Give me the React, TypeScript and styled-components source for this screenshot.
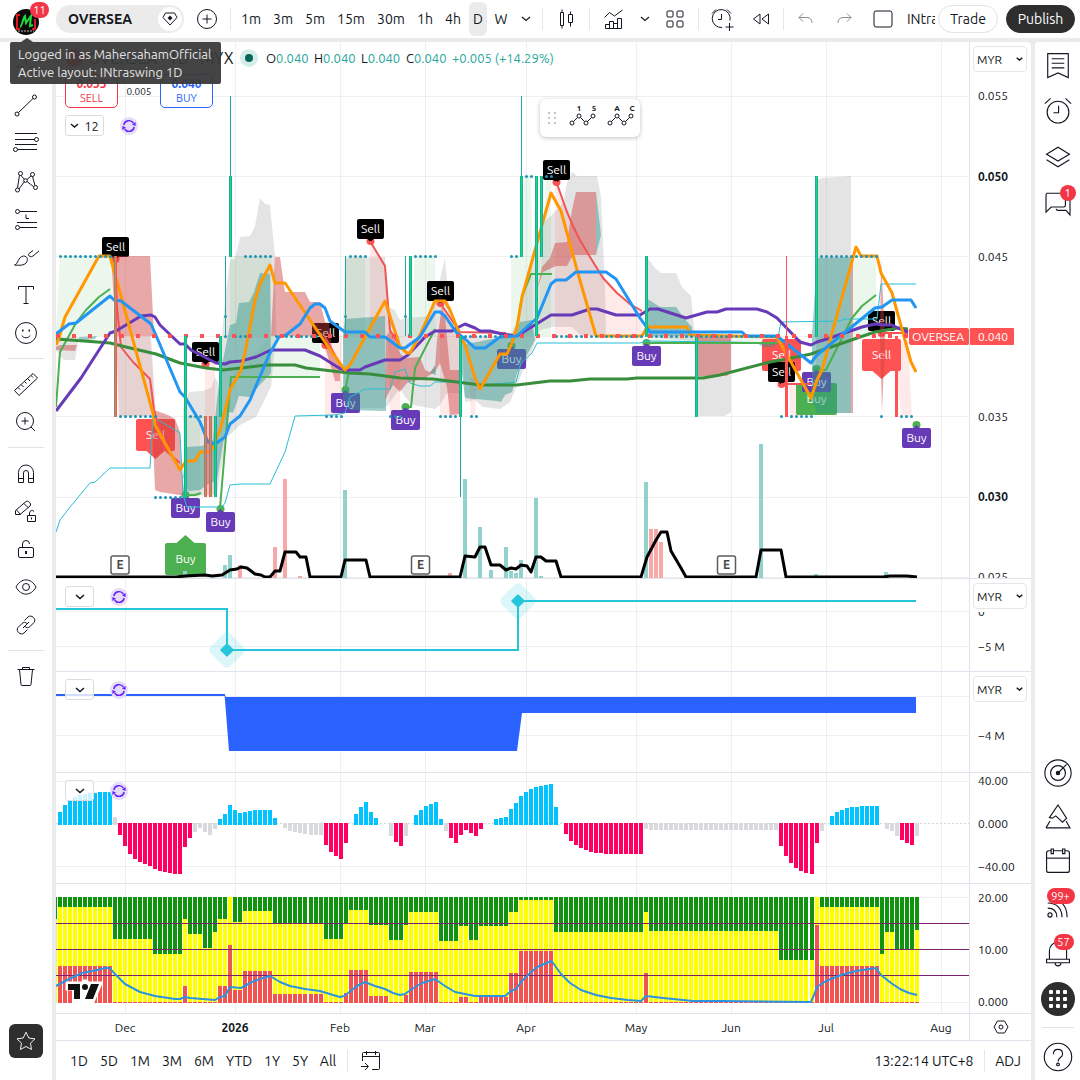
import React from 'react';
import styled, { createGlobalStyle } from 'styled-components';

const INK = '#131722';
const LINE = '#e0e3eb';
const GRID = 'rgba(42,46,57,0.07)';
const TEAL = '#26a69a';
const FONT = 'Ubuntu, "Noto Sans", "Open Sans", sans-serif';

const GlobalStyle = createGlobalStyle`
  *, *::before, *::after { box-sizing: border-box; }
  body { margin: 0; background: #ebebeb; color: ${INK}; font-family: ${FONT}; }
  button, select { font: inherit; color: inherit; margin: 0; padding: 0; border: 0; background: none; cursor: pointer; }
  svg { display: block; }
`;

/* ---------- layout ---------- */

const Shell = styled.div`
  height: 100vh;
  display: grid;
  grid-template: 38px minmax(0, 1fr) / 52px minmax(0, 1fr) 45px;
  gap: 4px;
  overflow: hidden;
`;
const Header = styled.header`
  grid-column: 1 / -1;
  display: flex;
  align-items: center;
  background: #fff;
  position: relative;
`;
const Divider = styled.span<{ $gap?: number }>`
  flex: none;
  width: 1px;
  height: 22px;
  margin: 0 ${p => p.$gap ?? 4}px;
  background: #e6e6e6;
`;
const ToolColumn = styled.nav`
  background: #fff;
  border-radius: 0 4px 0 0;
  padding: 6px 0;
  display: flex;
  flex-direction: column;
  align-items: center;
`;
const RightColumn = styled(ToolColumn)`
  border-radius: 4px 0 0 0;
  padding: 0;
`;
const Slot = styled.button<{ $h?: number; $w?: number }>`
  flex: none;
  position: relative;
  width: ${p => p.$w ?? 40}px;
  height: ${p => p.$h ?? 38}px;
  display: flex;
  align-items: center;
  justify-content: center;
`;
const Rule = styled.hr<{ $m?: number; $w?: number }>`
  width: ${p => p.$w ?? 36}px;
  height: 1px;
  border: 0;
  margin: ${p => p.$m ?? 6}px 0;
  background: #e3e3e3;
  flex: none;
`;
const Spacer = styled.div<{ $fixed?: number }>`
  flex: ${p => (p.$fixed ? `0 0 ${p.$fixed}px` : '1')};
`;
const Center = styled.main`
  display: flex;
  flex-direction: column;
  min-width: 0;
  min-height: 0;
  background: #fff;
  border-radius: 4px 4px 0 0;
  overflow: hidden;
`;
const Pane = styled.section<{ $size: number; $last?: boolean }>`
  position: relative;
  display: flex;
  flex: ${p => p.$size} 1 0;
  min-height: 0;
  border-bottom: ${p => (p.$last ? 0 : 1)}px solid ${LINE};
`;
const Plot = styled.svg`
  flex: 1;
  min-width: 0;
  height: 100%;
`;
const Scale = styled.div`
  position: relative;
  flex: none;
  width: 62px;
  border-left: 1px solid ${LINE};
  svg.labels { width: 61px; height: 100%; }
`;
const TimeRow = styled.div`
  display: flex;
  height: 27px;
  flex: none;
  border-top: 1px solid ${LINE};
`;
const AxisCorner = styled.button`
  width: 62px;
  border-left: 1px solid ${LINE};
  display: flex;
  align-items: center;
  justify-content: center;
`;
const BottomBar = styled.footer`
  display: flex;
  flex: none;
  align-items: center;
  height: 40px;
  padding: 1px 5px 0 8px;
  border-top: 1px solid ${LINE};
  font-size: 14px;
`;

/* ---------- header parts ---------- */

const Account = styled.button`
  position: relative;
  flex: none;
  width: 56px;
  height: 38px;
  padding: 5px 0 0 13px;
`;
const Count = styled.span<{ $w?: number; $top: number; $left: number }>`
  position: absolute;
  top: ${p => p.$top}px;
  left: ${p => p.$left}px;
  min-width: ${p => p.$w ?? 16}px;
  height: 16px;
  border-radius: 8px;
  background: #f23645;
  color: #fff;
  font-size: 11px;
  line-height: 16px;
  text-align: center;
`;
const SymbolPill = styled.div`
  display: flex;
  flex: none;
  align-items: center;
  justify-content: space-between;
  width: 128px;
  height: 28px;
  padding: 0 2px 0 12px;
  border-radius: 14px;
  background: #ebebeb;
`;
const SymbolName = styled.button`
  font-size: 14px;
  font-weight: 700;
`;
const PillIcon = styled.button`
  display: flex;
  align-items: center;
  justify-content: center;
  width: 24px;
  height: 24px;
  border-radius: 12px;
  background: #fff;
`;
const Interval = styled.button<{ $w: number; $active?: boolean }>`
  flex: none;
  width: ${p => (p.$active ? 18 : p.$w)}px;
  height: 34px;
  margin: 0 ${p => (p.$active ? 2 : 0)}px;
  border-radius: 6px;
  font-size: 14px;
  white-space: nowrap;
  background: ${p => (p.$active ? '#ebebeb' : 'none')};
`;
const LayoutName = styled.button`
  flex: none;
  width: 28px;
  overflow: hidden;
  white-space: nowrap;
  text-align: left;
  font-size: 14px;
`;
const RoundButton = styled.button<{ $dark?: boolean; $w: number }>`
  flex: none;
  width: ${p => p.$w}px;
  height: 28px;
  border: 1px solid ${p => (p.$dark ? '#2e2e2e' : '#e3e3e3')};
  border-radius: 14px;
  background: ${p => (p.$dark ? '#2e2e2e' : '#fff')};
  color: ${p => (p.$dark ? '#fff' : INK)};
  font-size: 14px;
`;
const Tooltip = styled.div`
  position: absolute;
  z-index: 5;
  top: 42px;
  left: 10px;
  padding: 3px 8px;
  width: 211px;
  height: 42px;
  border-radius: 2px;
  background: rgba(56, 56, 56, 0.94);
  color: #e3e3e3;
  font-size: 13px;
  line-height: 18px;
  white-space: nowrap;
  &::before {
    content: '';
    position: absolute;
    left: 11px;
    top: -4px;
    border: 6px solid transparent;
    border-top: 0;
    border-bottom: 4px solid rgba(56, 56, 56, 0.94);
  }
`;
const StarButton = styled.button`
  width: 34px;
  height: 34px;
  margin-bottom: 16px;
  border-radius: 6px;
  background: #2e2e2e;
  color: #fff;
  display: flex;
  align-items: center;
  justify-content: center;
`;
const AppsButton = styled.span`
  width: 34px;
  height: 34px;
  border-radius: 17px;
  background: #2e2e2e;
  display: flex;
  align-items: center;
  justify-content: center;
`;

/* ---------- overlays on the chart canvas ---------- */

const Legend = styled.div`
  position: absolute;
  top: 5px;
  left: 9px;
  display: flex;
  flex-direction: column;
  gap: 5px;
`;
const LegendRow = styled.div`
  display: flex;
  align-items: center;
  height: 22px;
  font-size: 13px;
`;
const Logo = styled.span`
  width: 18px;
  height: 18px;
  margin-right: 5px;
  border-radius: 9px;
  background: #f23645;
`;
const Title = styled.span`
  width: 144px;
  font-size: 16px;
  white-space: nowrap;
`;
const Status = styled.span`
  width: 18px;
  height: 18px;
  margin: 0 8px;
  border-radius: 9px;
  border: 5px solid #d5ede8;
  background: #056656;
`;
const Value = styled.span<{ $w?: number }>`
  width: ${p => p.$w ?? 47}px;
  white-space: nowrap;
  color: ${TEAL};
  b { font-weight: 400; color: ${INK}; }
`;
const TradeRow = styled.div`
  display: flex;
  align-items: center;
`;
const Quote = styled.button<{ $c: string }>`
  width: 53px;
  height: 34px;
  border: 1px solid ${p => p.$c};
  border-radius: 5px;
  background: #fff;
  color: ${p => p.$c};
  font-size: 11px;
  line-height: 14px;
  b { display: block; font-size: 12px; }
`;
const Spread = styled.span`
  width: 42px;
  font-size: 10px;
  text-align: center;
`;
const CollapseRow = styled.div`
  display: flex;
  align-items: center;
  gap: 16px;
  margin-top: 2px;
`;
const Collapse = styled.button<{ $w: number }>`
  display: flex;
  align-items: center;
  justify-content: center;
  gap: 5px;
  width: ${p => p.$w}px;
  height: 21px;
  border: 1px solid #dcdcdc;
  border-radius: 3px;
  background: rgba(255, 255, 255, 0.8);
  font-size: 13px;
`;
const PaneLegend = styled.div`
  position: absolute;
  top: 7px;
  left: 9px;
  display: flex;
  align-items: center;
  gap: 16px;
`;
const Favorites = styled.div`
  position: absolute;
  top: 57px;
  left: 484px;
  display: flex;
  align-items: center;
  width: 100px;
  height: 38px;
  padding-left: 8px;
  border-radius: 6px;
  background: #fff;
  box-shadow: 0 1px 4px rgba(0, 0, 0, 0.25);
`;
const UnitBox = styled.label`
  position: absolute;
  top: 4px;
  left: 3px;
  width: 54px;
  height: 29px;
  background: #fff;
  select {
    appearance: none;
    display: block;
    width: 54px;
    height: 26px;
    padding: 0 3px;
    border: 1px solid #e6e6e6;
    border-radius: 4px;
    font-size: 12px;
  }
  svg { position: absolute; right: 4px; top: 11px; pointer-events: none; }
`;
const Range = styled.button<{ $w: number }>`
  width: ${p => p.$w}px;
  white-space: nowrap;
`;

/* ---------- icons ---------- */

const Icon = ({ s = 28, w = 1, c = 'currentColor', children }: { s?: number; w?: number; c?: string; children: React.ReactNode }) => (
  <svg width={s} height={s} viewBox="0 0 28 28" fill="none" stroke={c} strokeWidth={w} aria-hidden="true">{children}</svg>
);
const Chevron = ({ s = 10, w = 1.5 }: { s?: number; w?: number }) => (
  <svg width={s} height={s * 0.6} viewBox="0 0 10 6" fill="none" stroke={INK} strokeWidth={w} aria-hidden="true"><path d="M1 1l4 3.5L9 1" /></svg>
);
const Sync = () => (
  <svg width="18" height="18" viewBox="0 0 18 18" fill="none" stroke="#651fff" strokeWidth="1.4" aria-hidden="true">
    <circle cx="9" cy="9" r="9" fill="#e4dcf8" stroke="none" />
    <path d="M3.8 8a5.3 5.3 0 0 1 9.600-2M14.200 10a5.300 5.300 0 0 1-9.600 2" />
    <path d="M15.600 5v4l-3.600-1.400zM2.400 13V9L6 10.400z" fill="#651fff" stroke="none" />
  </svg>
);

const tools: [string, React.ReactNode][] = [
  ['Cross', <path d="M14 4v8M14 16v8M3 14h9M16 14h9" />],
  ['Trend line', <><path d="M6.5 21.5L21 7.5" /><circle cx="5" cy="23" r="2" /><circle cx="22.5" cy="6" r="2" /></>],
  ['Fib retracement', <><path d="M3 4.5h22M3 10.5h19.500M3 15.500h22M5.500 20.500H25" /><circle cx="24.500" cy="10.500" r="2" /><circle cx="3.500" cy="20.500" r="2" /></>],
  ['Pattern', <><path d="M5.500 21L7.500 8M9 8.500l3.500 4M15 12.500l4-3.500M7 22l5.500-7.500M15 14.500l7 5.500M20.500 9.500l2.500 9" /><circle cx="5.500" cy="23" r="2" /><circle cx="8.500" cy="6.500" r="2" /><circle cx="13.500" cy="13.500" r="1.800" /><circle cx="20.500" cy="7.500" r="2" /><circle cx="23.500" cy="20.500" r="2" /></>],
  ['Long position', <><path d="M8 6.500h17M5 17.500h20M8 22.500h17M14 9.500v4h3" /><circle cx="5.500" cy="6.500" r="2" /><circle cx="5.500" cy="22.500" r="2" /></>],
  ['Brush', <><path d="M2.500 22c4-1 3-8 9-9 4 0 5 4 2.500 7-2 2.500-6 2.500-11.500 2z" /><path d="M27 8l-6 5c-2 2-6-.5-4-2.500l4-3" /></>],
  ['Text', <path d="M6.500 8.500v-3h15v3M14 5.500v17M11.500 22.500h5" />],
  ['Emoji', <><circle cx="14" cy="14" r="10.500" /><path d="M10 16.500c1 3 7 3 8 0" /><path d="M10 11.500h1.500M16.500 11.500H18" strokeWidth="2" /></>],
];
const tools2: [string, React.ReactNode][] = [
  ['Measure', <path d="M2.500 20.500L21 3.500l4.500 4.500L7 25.500zM9 14.500l2.500 2.500M12.500 11.500l2 2M15.500 8.500l2.500 2.500M6 17.500l2 2M19 5.500l2 2" />],
  ['Zoom in', <><circle cx="13" cy="13" r="8.500" /><path d="M13 9.500v7M9.500 13h7M19 19l4 4" /></>],
];
const tools3: [string, React.ReactNode][] = [
  ['Magnet', <path d="M6.500 23.500v-10a7.500 7.500 0 0 1 15 0v10h-5V14a2.500 2.500 0 0 0-5 0v9.500zM6.500 19.500h5M16.500 19.500h5" />],
  ['Drawing mode', <><path d="M3.500 17.500v-4L14 4.500c2-1.500 6 2 4 4.500L8 17.500zM12 6.500l4.500 4.500M4.500 13l4 4.500" /><path d="M15.500 18.500h8v6h-8zM17.500 18.500v-2.500a2.500 2.500 0 0 1 4.500-1.500M19.500 20.500v2" /></>],
  ['Lock', <><rect x="6.500" y="12.500" width="15" height="10" rx="1.500" /><path d="M10.500 12.500V9a3.500 3.500 0 0 1 7 0" /><path d="M14 16v3" strokeWidth="2" /></>],
  ['Hide', <><path d="M4 14c5-9.500 15-9.500 20 0-5 9.500-15 9.500-20 0z" /><circle cx="14" cy="14" r="3.500" /></>],
  ['Link', <path d="M12.500 9.500l3.500-3.500c3-3 9 2 6 5.500l-4 4c-1.500 1.500-3.500 1.500-5 0M15.500 18.500L12 22c-3 3-9-2-6-5.500l4-4c1.500-1.500 3.500-1.500 5 0M11 17l6-6" />],
];

const ElliottWave = ({ a, b }: { a: string; b: string }) => (
  <svg width="34" height="30" viewBox="0 0 34 30" fill="none" stroke={INK} strokeWidth="1" aria-hidden="true">
    <path d="M7.500 18.500l4-4M14.500 14.500l4 4M21.500 18.500l4-4" />
    <circle cx="6" cy="20" r="2" /><circle cx="13" cy="13" r="2" /><circle cx="20" cy="20" r="2" /><circle cx="27" cy="13" r="2" />
    <text x="13" y="8" fontSize="8" fontWeight="700" textAnchor="middle" fill={INK} stroke="none">{a}</text>
    <text x="28" y="8" fontSize="8" fontWeight="700" textAnchor="middle" fill={INK} stroke="none">{b}</text>
  </svg>
);

/* ---------- chart data ---------- */

const barX = (i: number) => Math.round(58 + i * 5.01);
const monthX = [125, 235, 340, 425, 526, 636, 731, 826, 941];
const months = ['Dec', '2026', 'Feb', 'Mar', 'Apr', 'May', 'Jun', 'Jul', 'Aug'];

const greyAreas = [
  '56,337 79,337 75,360 64,360 56,350',
  '116,336 151,336 154,386 156,416 119,416',
  '183,410 189,392 203,391 211,388 215,377 221,388 222,336 225,300 230,260 235,259 240,237 250,236 255,226 260,198 265,204 270,205 275,257 276,336 271,387 263,403 256,417 240,425 232,433 227,437 222,463 217,494 185,497',
  '343,336 345,258 385,257 388,307 395,310 400,320 407,318 430,316 440,280 445,258 450,320 455,325 460,336 460,393 447,393 440,405 435,409 413,405 405,397 400,388 388,405 384,408 345,408',
  '462,337 510,336 517,322 521,300 527,280 533,250 542,223 550,217 563,203 567,183 572,172 577,176 597,176 601,197 605,290 606,336 580,335 572,327 553,327 540,330 532,350 520,378 510,402 500,409 483,407 475,400 465,402',
  '646,256 655,268 661,273 676,273 682,287 691,296 695,337 731,337 731,412 725,416 698,416 694,341 646,337',
  '816,180 822,178 851,176 851,413 816,413',
];
const greenAreas = [
  '56,330 60,256 112,256 114,336 56,336', '187,416 200,416 200,497 187,497', '230,256 271,256 271,336 230,336',
  '271,336 320,336 320,377 230,377', '345,256 365,256 365,336 345,336', '411,336 415,256 435,256 436,336',
  '511,336 511,256 521,256 524,176 531,176 533,336', '542,256 546,176 551,176 551,336 537,336',
  '646,336 777,336 777,343 646,343', '851,256 876,256 876,336 851,336',
];
const pinkAreas = [
  '116,336 150,336 156,416 119,416', '205,362 215,362 215,497 205,497', '325,336 342,336 342,416 325,416',
  '370,241 385,266 390,330 392,336 370,336', '388,336 400,336 400,416 390,416', '440,303 460,332 460,416 440,416',
  '469,378 477,378 475,416 471,416', '555,182 580,240 603,278 630,304 642,311 642,336 555,336',
  '789,384 812,384 812,416 790,416', '894,341 908,341 912,416 901,416',
];
const redAreas = [
  '111,256 150,256 154,336 116,336', '56,347 60,345 77,345 75,351 56,350',
  '152,386 154,410 168,415 175,419 180,432 181,467 185,496 179,495 167,493 160,492 155,490 153,440',
  '271,336 275,257 280,257 285,292 305,292 310,302 320,302 325,322 329,323 333,357 340,363 340,381 335,381 331,367 323,340 319,336',
  '385,400 386,337 390,330 400,353 405,358 420,357 425,370 430,372 435,367 437,340 442,307 445,317 450,370 460,370 460,414 450,415 447,387 440,363 435,372 425,378 418,380 407,383 400,392 393,385',
  '537,290 542,267 550,258 555,243 567,242 572,210 576,192 596,192 596,255 573,255 567,266 556,266 543,272',
  '697,337 731,337 731,372 727,376 697,376', '851,268 853,260 853,413 851,413', '881,258 885,337 882,413 880,337',
];
const tealAreas = [
  '79,337 97,336 95,339 79,341',
  '183,477 187,447 202,446 213,440 217,400 221,370 230,325 236,323 239,303 249,302 254,292 260,273 270,274 271,373 258,387 250,397 239,396 233,413 229,412 222,450 217,480 207,485 200,490 188,491',
  '343,336 345,319 385,316 386,411 350,410 343,400', '430,373 435,365 436,375',
  '462,337 465,344 477,342 497,338 510,337 517,330 520,322 532,320 535,340 517,373 512,392 505,395 501,402 497,401 465,398 462,373',
  '596,192 601,235 596,255', '646,298 660,307 676,307 683,317 692,327 692,336 646,336',
  '757,343 777,343 774,347 763,347', '812,336 817,258 851,257 851,413 817,413 812,400',
];
const studyLines: [string, number, string][] = [
  ['#26bfd6', 1, '56,532 60,520 70,507 90,483 95,482 110,468 150,468 153,417 180,433 183,495 187,507 222,507 225,503 230,485 240,484 270,484 285,452 295,416 333,415 345,413 350,397 365,389 390,389 395,372 405,369 410,383 420,386 430,386 435,382 460,382 483,385 516,382 521,363 532,353 537,343 640,343 647,341 727,342 777,343 781,322 840,321 845,319 877,319 881,284 916,284'],
  ['#4caf50', 2, '56,407 60,352 76,323 86,310 99,297 110,289'],
  ['#4caf50', 2, '185,495 195,495 201,493'],
  ['#4caf50', 2, '220,508 229,400 231,377 320,377'],
  ['#4caf50', 2, '345,390 349,372'],
  ['#4caf50', 2, '405,407 411,407 415,368 435,329'],
  ['#4caf50', 2, '510,346 517,327 522,297 531,274 552,274'],
  ['#4caf50', 2, '646,343 777,343'],
  ['#4caf50', 2, '817,370 826,370 852,318 862,306 876,295'],
  ['#f05455', 2, '115,257 117,307 121,347 133,362 150,379 154,410 165,450 180,463'],
  ['#f05455', 2, '325,337 341,366'],
  ['#f05455', 2, '370,241 385,266 390,330 400,347'],
  ['#f05455', 2, '440,303 460,332 506,333'],
  ['#f05455', 2, '556,181 567,212 573,226 580,240 590,257 603,278 617,293 630,304 642,311'],
  ['#f05455', 2, '781,384 811,384'],
  ['#f05455', 2, '881,333 908,333'],
  ['#388e3c', 3, '56,339 84,341 110,343 126,347 156,354 180,363 206,368 223,370 241,368 266,365 295,365 306,368 350,373 370,374 400,378 433,379 457,382 480,385 517,385 550,381 570,381 590,379 627,379 637,378 703,378 720,375 770,362 787,359 811,354 860,337 875,332 898,328 908,329'],
  ['#673ab7', 3, '56,411 81,378 110,333 116,331 141,316 151,315 155,317 160,325 180,344 185,344 191,350 216,363 225,364 230,362 241,361 256,357 271,350 305,350 320,356 339,368 345,370 360,370 365,367 385,360 400,360 408,355 425,337 435,331 452,331 457,328 465,324 475,328 480,331 490,331 502,334 517,336 551,315 572,315 590,309 597,309 616,315 640,315 650,309 658,309 686,318 707,312 717,312 726,309 757,309 767,312 777,318 800,342 811,345 817,342 830,338 862,327 875,324 885,325 892,325 898,328 908,332'],
  ['#ff9800', 3, '56,345 59,338 65,317 99,256 110,256 154,417 155,425 180,470 186,461 195,461 200,452 210,452 214,445 221,427 230,390 241,370 245,353 255,300 260,284 270,265 275,283 285,283 333,354 345,370 350,365 365,337 385,301 400,347 407,353 410,353 420,335 435,301 445,301 450,310 460,335 465,345 475,378 480,389 500,354 507,354 512,343 517,327 522,297 537,243 551,193 561,211 577,270 596,336 642,336 647,327 687,327 690,335 777,337 811,398 817,380 822,370 832,333 856,247 861,256 877,256 881,273 892,293 911,362 916,372'],
  ['#2196f3', 3, '56,334 69,324 76,323 110,296 114,300 121,301 151,324 155,333 180,392 185,397 200,422 208,442 215,444 225,437 230,424 240,416 250,400 269,355 279,337 286,335 300,324 310,308 315,304 320,304 325,308 330,321 345,332 365,332 370,337 385,337 400,348 405,348 420,337 435,312 440,312 445,316 456,332 465,339 475,348 485,348 500,337 517,336 537,318 551,284 556,280 566,280 576,272 606,272 616,279 640,318 650,332 742,332 746,336 777,336 811,363 817,355 875,308 882,307 892,300 911,300 916,308'],
];
const volumeAverage = '56,577 176,577 185,576 205,575 212,576 222,575 230,570 237,569 241,567 247,568 255,574 261,575 265,577 270,577 275,571 280,571 285,552 296,552 300,557 306,557 310,577 341,577 345,560 366,560 370,577 460,577 465,556 475,557 480,547 485,547 491,565 500,565 506,570 511,568 516,569 521,565 527,566 531,572 536,557 541,557 546,561 556,561 561,577 641,577 647,557 656,540 661,532 667,532 671,551 681,568 686,577 756,577 761,550 781,550 786,577 883,577 890,576 907,576 917,577';

/* x, top, falling */
const volumes: [number, number, boolean?][] = [
  [185, 571], [225, 565], [230, 555], [240, 565, true], [275, 547, true], [285, 479, true], [300, 576, true], [345, 490],
  [450, 573, true], [465, 479], [480, 527], [491, 570], [506, 547], [511, 571], [516, 573], [521, 560], [536, 498],
  [541, 576], [646, 482], [651, 529, true], [656, 529, true], [661, 542, true], [761, 444], [816, 574], [886, 572],
];

/* x, top, bottom, kind */
const candles: [number, number, number, 'thin' | 'up' | 'down' | 'thinDown' | 'mix'][] = [
  [230, 96, 176, 'thin'], [230, 176, 257, 'up'], [115, 256, 417, 'mix'], [225, 256, 336, 'thin'], [185, 336, 498, 'up'],
  [220, 336, 417, 'up'], [205, 416, 497, 'mix'], [210, 416, 497, 'mix'], [215, 416, 497, 'up'], [345, 256, 336, 'thin'],
  [405, 256, 336, 'thin'], [410, 256, 336, 'up'], [460, 336, 417, 'up'], [460, 417, 497, 'thin'], [521, 96, 176, 'thin'],
  [521, 176, 257, 'up'], [536, 176, 336, 'up'], [541, 176, 257, 'up'], [646, 256, 337, 'up'], [696, 337, 417, 'up'],
  [786, 256, 336, 'thinDown'], [786, 336, 417, 'down'], [816, 176, 337, 'up'], [896, 336, 417, 'down'],
];

/* y, first x, last x */
const dotRuns: [number, number, number][] = [
  [256, 60, 111], [256, 245, 271], [256, 350, 366], [256, 415, 436], [256, 511, 517], [256, 821, 877],
  [176, 526, 532], [176, 546, 552], [336, 225, 226], [336, 235, 246], [336, 276, 316], [336, 465, 501], [336, 556, 641], [336, 651, 777],
  [416, 120, 156], [416, 190, 201], [416, 326, 342], [416, 390, 401], [416, 440, 456], [416, 471, 476],
  [416, 781, 782], [416, 791, 812], [416, 881, 882], [416, 901, 912], [497, 155, 181], [316, 225, 226], [316, 345, 346], [316, 405, 406],
];
const run = (from: number, to: number, step: number) => {
  const out: number[] = [];
  for (let v = from; v <= to; v += step) out.push(v);
  return out;
};

/* ---------- momentum histogram: tone, first bar index, then heights ---------- */
type Tone = 'b' | 'p' | 'g';
const toneColor: Record<Tone, string> = { b: '#00c4ff', p: '#ff0062', g: '#d9dade' };
const momentum: [Tone, number, number[]][] = [
  ['b', 0, [12, 19, 23, 27, 29, 30, 31, 31, 32, 32, 32]],
  ['g', 11, [7]],
  ['p', 12, [-11, -22, -30, -35, -38, -40, -42, -45, -47, -48, -49, -50, -50, -23, -14]],
  ['g', 27, [-8, -4, -8, -11, -5]],
  ['b', 32, [5, 10, 19, 14, 11, 12, 13, 14, 14, 14, 14, 6]],
  ['g', 45, [-4, -7, -8, -9, -10, -11, -11, -11]],
  ['p', 53, [-21, -28, -32, -35, -19]],
  ['b', 59, [10, 17, 22, 12, 6]],
  ['g', 66, [-12]], ['p', 67, [-18, -22]], ['g', 69, [-12]],
  ['b', 71, [9, 14, 18, 20, 22, 5]],
  ['g', 77, [-7]], ['p', 78, [-14, -19, -11, -6, -9, -12, -5]],
  ['b', 87, [5, 6, 7, 15, 21, 28, 32, 35, 37, 38, 39, 40, 17]],
  ['p', 101, [-10, -17, -21, -24, -26, -28, -29, -29, -30, -30, -30, -30, -30, -30, -30, -30]],
  ['g', 117, [-5, ...Array(26).fill(-6)]],
  ['p', 144, [-22, -32, -39, -44, -47, -49, -50, -19]],
  ['g', 152, [-7]],
  ['b', 154, [8, 12, 14, 16, 17, 17, 18, 18, 18, 18]],
  ['g', 165, [-5, -7, -12]], ['p', 168, [-16, -19, -21]], ['g', 171, [-12]],
];

/* first bar, last bar, bottom of green, top of red */
const stacks: [number, number, number, number][] = [
  [0, 10, 907, 966], [11, 18, 939, 1002], [19, 24, 954, 1002], [25, 25, 919, 986], [26, 28, 934, 1002], [29, 30, 948, 1002],
  [31, 31, 932, 1002], [32, 33, 919, 986], [34, 34, 897, 945], [35, 36, 922, 990], [37, 42, 911, 971], [43, 52, 923, 994],
  [53, 56, 939, 1002], [57, 57, 923, 993], [58, 61, 910, 970], [62, 65, 925, 996], [66, 68, 940, 1002], [69, 69, 925, 995],
  [70, 75, 912, 972], [76, 79, 941, 1002], [80, 81, 926, 997], [82, 83, 940, 1002], [84, 89, 926, 997], [90, 91, 912, 973],
  [92, 98, 900, 951], [99, 116, 932, 1002], [117, 117, 912, 973], [118, 143, 931, 1002], [144, 150, 960, 1002], [151, 151, 897, 925],
  [152, 163, 907, 966], [164, 164, 954, 1002], [165, 166, 932, 1002], [167, 170, 949, 1002], [171, 171, 930, 1002],
];
const trendLine = '56,986 67,980 82,973 97,970 105,968 110,968 113,972 125,984 140,992 155,996 175,999 180,999 185,997 190,998 215,1000 220,997 225,996 230,987 241,988 252,982 263,978 270,976 280,982 290,986 305,989 320,991 333,995 340,997 344,996 348,993 357,986 365,982 375,986 385,989 393,993 400,995 405,994 412,989 422,983 435,979 445,986 455,992 465,994 475,996 505,996 511,991 516,989 521,982 528,975 537,967 551,961 553,963 561,974 570,983 581,990 596,995 611,998 628,1000 641,1001 646,996 663,998 693,1001 722,1001 811,1002 814,995 817,987 826,981 841,975 856,971 876,968 881,975 891,983 900,989 909,993 917,995';

/* ---------- chart pieces ---------- */

const Grid = ({ ys, top, bottom }: { ys: number[]; top: number; bottom: number }) => (
  <g fill={GRID}>
    {monthX.map(x => <rect key={x} x={x} y={top} width="1" height={bottom - top} />)}
    {ys.map(y => <rect key={y} x="56" y={y} width="913" height="1" />)}
  </g>
);

const Tag = ({ x, y, kind }: { x: number; y: number; kind: 'sell' | 'buy' }) => {
  const sell = kind === 'sell';
  const w = sell ? 27 : 29;
  return (
    <g>
      <circle cx={x} cy={sell ? y + 12 : y - 13} r="4" fill={sell ? '#ff5252' : '#4caf50'} />
      <rect x={x - w / 2} y={y - 10} width={w} height="20" rx="2" fill={sell ? '#000' : '#673ab7'} />
      <path d={sell ? `M${x - 3} ${y + 10}h6l-3 3z` : `M${x - 3} ${y - 10}h6l-3 -3z`} fill={sell ? '#000' : '#673ab7'} />
      <text x={x} y={y + 4} fontSize="12" fill="#fff" textAnchor="middle">{sell ? 'Sell' : 'Buy'}</text>
    </g>
  );
};
const BigTag = ({ x, y, kind }: { x: number; y: number; kind: 'sell' | 'buy' }) => {
  const sell = kind === 'sell';
  const w = sell ? 39 : 41;
  const fill = sell ? '#ff5252' : '#4caf50';
  return (
    <g>
      <rect x={x - w / 2} y={y - 16} width={w} height="32" rx="2" fill={fill} />
      <path d={sell ? `M${x - 9} ${y + 16}h18l-9 8z` : `M${x - 9} ${y - 16}h18l-9 -8z`} fill={fill} />
      <text x={x} y={y + 4} fontSize="12" fill="#fff" textAnchor="middle">{sell ? 'Sell' : 'Buy'}</text>
    </g>
  );
};
const Candle = ({ c }: { c: (typeof candles)[number] }) => {
  const [x, top, bottom, kind] = c;
  const h = bottom - top;
  if (kind === 'thin') return <rect x={x} y={top} width="1" height={h} fill={TEAL} />;
  if (kind === 'thinDown') return <rect x={x} y={top} width="1" height={h} fill="#ff5252" />;
  if (kind === 'down') return <rect x={x - 1} y={top} width="3" height={h} fill="#ff5252" />;
  return (
    <g>
      <rect x={x - 1} y={top} width="3" height={h} fill={kind === 'up' ? TEAL : '#ff5252'} />
      <rect x={x} y={top} width="1" height={h} fill={kind === 'up' ? '#00e676' : '#5dbb73'} />
    </g>
  );
};
const Area = ({ shapes, fill }: { shapes: string[]; fill: string }) => (
  <g fill={fill}>{shapes.map(s => <polygon key={s} points={s} />)}</g>
);

const MainPlot = () => (
  <Plot viewBox="56 42 913 536" preserveAspectRatio="xMinYMin slice" role="img" aria-label="OVERSEA price chart">
    <Grid ys={[96, 176, 256, 336, 416, 497, 577]} top={42} bottom={578} />
    <Area shapes={greyAreas} fill="rgba(120,120,120,0.2)" />
    <Area shapes={greenAreas} fill="rgba(76,175,80,0.11)" />
    <Area shapes={pinkAreas} fill="rgba(255,82,82,0.12)" />
    <BigTag x={155.5} y={435} kind="sell" />
    <BigTag x={781.5} y={355} kind="sell" />
    <BigTag x={881.5} y={355} kind="sell" />
    <BigTag x={185.5} y={559} kind="buy" />
    <BigTag x={816.5} y={399} kind="buy" />
    {[[115.5, 247], [205.5, 352], [325.5, 333], [370.5, 229], [440.5, 291], [556.5, 170], [781.5, 372], [881.5, 321]].map(([x, y]) => <Tag key={x} x={x} y={y} kind="sell" />)}
    {[[185.5, 508], [220.5, 522], [345.5, 403], [405.5, 420], [511.5, 359], [646.5, 356], [816.5, 382], [916.5, 438]].map(([x, y]) => <Tag key={x} x={x} y={y} kind="buy" />)}
    <Area shapes={redAreas} fill="rgba(205,62,62,0.45)" />
    <Area shapes={tealAreas} fill="rgba(50,150,140,0.48)" />
    {volumes.map(([x, y, down]) => <rect key={x} x={x - 2} y={y} width="4" height={578 - y} fill={down ? '#f7a9a7' : '#92d2cc'} />)}
    <g fill="none" strokeLinejoin="round">
      {studyLines.map(([c, w, p]) => <polyline key={p} points={p} stroke={c} strokeWidth={w} />)}
    </g>
    <g fill="#1f93b5">
      {dotRuns.map(([y, a, b]) => run(a, b, 5).map(x => <circle key={`${x}-${y}`} cx={x + 0.5} cy={y + 0.5} r="1.5" />))}
    </g>
    <g fill="#ff5252">{run(58, 908, 16).map(x => <rect key={x} x={x - 2} y="334" width="4" height="4" />)}</g>
    {candles.map((c, i) => <Candle key={i} c={c} />)}
    <polyline points={volumeAverage} fill="none" stroke="#000" strokeWidth="3" strokeLinejoin="round" />
    {[120, 420.5, 726.5].map(x => (
      <g key={x}>
        <rect x={x - 9} y="556" width="18" height="18" rx="2" fill="#fff" stroke="#5d5d5d" strokeWidth="1.5" />
        <text x={x} y="569" fontSize="12" fontWeight="600" fill="#4a4a4a" textAnchor="middle">E</text>
      </g>
    ))}
    <rect x="909" y="328" width="60" height="17" rx="2" fill="#ff5252" />
    <text x="912" y="341" fontSize="12" fill="#fff">OVERSEA</text>
  </Plot>
);

type Label = [y: number, text: string, bold?: boolean];
const ScaleLabels = ({ top, height, items, children }: { top: number; height: number; items: Label[]; children?: React.ReactNode }) => (
  <svg className="labels" viewBox={`0 ${top} 61 ${height}`} preserveAspectRatio="xMinYMin slice" fontSize="12" fill={INK}>
    {items.map(([y, t, bold]) => <text key={t} x="8" y={y + 4} fontWeight={bold ? 700 : 400}>{t}</text>)}
    {children}
  </svg>
);
const Unit = ({ id }: { id: string }) => (
  <UnitBox htmlFor={id}>
    <select id={id} aria-label="Currency" defaultValue="MYR"><option>MYR</option></select>
    <Chevron s={7} w={2} />
  </UnitBox>
);
const PaneTools = () => (
  <PaneLegend>
    <Collapse $w={29} aria-label="Show indicator legend"><Chevron /></Collapse>
    <Sync />
  </PaneLegend>
);
const Diamond = ({ x, y }: { x: number; y: number }) => (
  <g fill="#26c6da">
    <rect x={x - 14} y={y - 14} width="28" height="28" rx="5" opacity="0.16" transform={`rotate(45 ${x} ${y})`} />
    <rect x={x - 5} y={y - 5} width="10" height="10" rx="1" transform={`rotate(45 ${x} ${y})`} />
  </g>
);

const intervals: [string, number][] = [['1m', 32], ['3m', 32], ['5m', 32], ['15m', 40], ['30m', 40], ['1h', 28], ['4h', 28], ['D', 22], ['W', 24]];
const ranges: [string, number][] = [['1D', 30], ['5D', 30], ['1M', 32], ['3M', 32], ['6M', 32], ['YTD', 38], ['1Y', 28], ['5Y', 28], ['All', 28]];

export default function App() {
  return (
    <>
      <GlobalStyle />
      <Shell>
        <Header>
          <Account aria-label="Account">
            <svg width="26" height="26" viewBox="0 0 26 26" aria-hidden="true">
              <circle cx="13" cy="13" r="13" fill="#0b0b0b" />
              <path d="M7 6H4v14h3M19 20h3V10" fill="none" stroke="#e01919" strokeWidth="2" />
              <path d="M7 18c2 0 3-9 5-11l1 7 5-7-1 10 3-1" fill="none" stroke="#1edb3a" strokeWidth="2" />
              <path d="M5 22h16" stroke="#bbb" strokeWidth="1" strokeDasharray="2 1" />
            </svg>
            <Count $w={19} $top={2} $left={30}>11</Count>
          </Account>
          <SymbolPill>
            <SymbolName>OVERSEA</SymbolName>
            <PillIcon aria-label="Symbol details">
              <svg width="16" height="14" viewBox="0 0 16 14" fill="none" stroke={INK}><path d="M3.5 1h9L15 5.500 8 13 1 5.500z" /><path d="M8 3.500l2.500 2.500L8 8.500 5.500 6zM8 8.500V12" fill={INK} stroke="none" /></svg>
            </PillIcon>
          </SymbolPill>
          <Slot $w={45} aria-label="Compare symbols"><Icon><circle cx="14" cy="14" r="9.5" /><path d="M14 9.500v9M9.500 14h9" /></Icon></Slot>
          <Spacer $fixed={1} />
          <Divider $gap={0} />
          <Spacer $fixed={4} />
          {intervals.map(([t, w]) => <Interval key={t} $w={w} $active={t === 'D'}>{t}</Interval>)}
          <Slot $w={26} aria-label="More intervals"><Chevron w={1.2} /></Slot>
          <Divider $gap={3} />
          <Slot $w={40} aria-label="Candles"><Icon><path d="M8.500 7.500h3v13h-3zM10 4.500v3M10 20.500v3M16.500 9.500h4v8h-4zM18.500 6.500v3M18.500 17.500v4" /></Icon></Slot>
          <Divider $gap={3} />
          <Slot $w={42} aria-label="Indicators"><Icon><path d="M5.500 23.500v-4h4v-3h4v2h4v-5h4v10zM9.500 19v4.500M13.500 18v5.500M17.500 18v5.500M4.500 12.500l5-5 5 3.500 8-6" /></Icon></Slot>
          <Slot $w={20} aria-label="Favorite indicators"><Chevron w={1.2} /></Slot>
          <Slot $w={40} aria-label="Templates"><Icon><rect x="6" y="6" width="6" height="6" rx="1" /><rect x="16" y="6" width="6" height="6" rx="1" /><rect x="6" y="16" width="6" height="6" rx="1" /><rect x="16" y="16" width="6" height="6" rx="1" /></Icon></Slot>
          <Divider $gap={3} />
          <Slot $w={40} aria-label="Alert"><Icon><path d="M22 15.500a9 9 0 1 0-8 7M4 8.500L8 4.500M19 4.500l4 4M13.500 9v5.500H10M21.500 18v8M17.500 22h8" /></Icon></Slot>
          <Slot $w={38} aria-label="Replay"><Icon><path d="M13 9v10l-6.500-5zM21.500 9v10L15 14z" /></Icon></Slot>
          <Divider $gap={3} />
          <Slot $w={38} aria-label="Undo"><Icon c="#8b8d94"><path d="M11 8.500l-4 4 4 4M7 12.500h8c3 0 5 2 5 5.500" /></Icon></Slot>
          <Slot $w={38} aria-label="Redo"><Icon c="#8b8d94"><path d="M17 8.500l4 4-4 4M21 12.500h-8c-3 0-5 2-5 5.500" /></Icon></Slot>
          <Slot $w={40} aria-label="Layout"><Icon><rect x="5" y="6" width="18" height="16" rx="2" /></Icon></Slot>
          <Spacer $fixed={4} />
          <LayoutName>INtra</LayoutName>
          <Spacer />
          <RoundButton $w={60}>Trade</RoundButton>
          <Spacer $fixed={8} />
          <RoundButton $w={69} $dark>Publish</RoundButton>
          <Spacer $fixed={5} />
          <Tooltip role="tooltip">Logged in as MahersahamOfficial<br />Active layout: INtraswing 1D</Tooltip>
        </Header>

        <ToolColumn aria-label="Drawing tools">
          {tools.map(([n, d]) => <Slot key={n} aria-label={n}><Icon>{d}</Icon></Slot>)}
          <Rule />
          {tools2.map(([n, d]) => <Slot key={n} aria-label={n}><Icon>{d}</Icon></Slot>)}
          <Rule />
          {tools3.map(([n, d]) => <Slot key={n} aria-label={n}><Icon>{d}</Icon></Slot>)}
          <Rule />
          <Slot aria-label="Remove objects"><Icon><path d="M5.500 7.500h17M10.500 7.500v-2h7v2M7.500 7.500l1.500 15c0 .6.400 1 1 1h8c.6 0 1-.4 1-1l1.500-15" /></Icon></Slot>
          <Spacer />
          <StarButton aria-label="Favorites"><Icon s={26}><path d="M14 4.500l3 6.300 6.700.9-4.900 4.700 1.200 6.800-6-3.300-6 3.300 1.200-6.800-4.900-4.700 6.700-.9z" /></Icon></StarButton>
        </ToolColumn>

        <Center>
          <Pane $size={536}>
            <MainPlot />
            <Scale>
              <ScaleLabels top={42} height={536} items={[[96, '0.055'], [177, '0.050', true], [257, '0.045'], [417, '0.035'], [497, '0.030', true], [577, '0.025']]}>
                <rect x="0" y="328" width="44" height="17" rx="1" fill="#ff5252" />
                <text x="8" y="341" fill="#fff">0.040</text>
              </ScaleLabels>
              <Unit id="unit-main" />
            </Scale>
            <Legend>
              <LegendRow>
                <Logo /><Title>OVERSEA · 1D · MYX</Title><Status />
                <Value $w={48}><b>O</b>0.040</Value><Value><b>H</b>0.040</Value><Value $w={45}><b>L</b>0.040</Value><Value $w={46}><b>C</b>0.040</Value>
                <Value $w={100}>+0.005 (+14.29%)</Value>
              </LegendRow>
              <TradeRow>
                <Quote $c="#f23645"><b>0.035</b>SELL</Quote>
                <Spread>0.005</Spread>
                <Quote $c="#2962ff"><b>0.040</b>BUY</Quote>
              </TradeRow>
              <CollapseRow>
                <Collapse $w={39} aria-label="Show 12 indicators"><Chevron s={9} />12</Collapse>
                <Sync />
              </CollapseRow>
            </Legend>
            <Favorites>
              <svg width="8" height="14" viewBox="0 0 8 14" fill="#c4c4c4"><path d="M0 1h2v2H0zM6 1h2v2H6zM0 6h2v2H0zM6 6h2v2H6zM0 11h2v2H0zM6 11h2v2H6z" /></svg>
              <Spacer $fixed={8} />
              <Slot $w={38} aria-label="Elliott impulse wave"><ElliottWave a="1" b="5" /></Slot>
              <Slot $w={38} aria-label="Elliott correction wave"><ElliottWave a="A" b="C" /></Slot>
            </Favorites>
          </Pane>

          <Pane $size={92}>
            <Plot viewBox="56 579 913 92" preserveAspectRatio="xMinYMin slice">
              <Grid ys={[611, 646]} top={579} bottom={671} />
              <Diamond x={227} y={650} /><Diamond x={518} y={601} />
              <path d="M56 609H227V650H518V601H916" fill="none" stroke="#26c6da" strokeWidth="2" />
            </Plot>
            <Scale>
              <ScaleLabels top={579} height={92} items={[[612, '0'], [647, '−5 M']]} />
              <Unit id="unit-2" />
            </Scale>
            <PaneTools />
          </Pane>

          <Pane $size={100}>
            <Plot viewBox="56 672 913 100" preserveAspectRatio="xMinYMin slice">
              <Grid ys={[696, 735]} top={672} bottom={772} />
              <path d="M56 695H225" stroke="#2962ff" strokeWidth="2" />
              <path d="M224.500 694L229 751H517L522 713H916V697H226z" fill="#2962ff" />
            </Plot>
            <Scale>
              <ScaleLabels top={672} height={100} items={[[736, '−4 M']]} />
              <Unit id="unit-3" />
            </Scale>
            <PaneTools />
          </Pane>

          <Pane $size={110}>
            <Plot viewBox="56 773 913 110" preserveAspectRatio="xMinYMin slice">
              <Grid ys={[781, 866]} top={773} bottom={883} />
              <path d="M56 823.500H969" stroke="#d5d5d8" strokeDasharray="2 2" />
              {momentum.map(([tone, start, hs]) => hs.map((h, i) => (
                <rect key={start + i} x={barX(start + i)} y={h > 0 ? 824 - h : 823} width="4" height={Math.abs(h) + 1} fill={toneColor[tone]} />
              )))}
            </Plot>
            <Scale><ScaleLabels top={773} height={110} items={[[781, '40.00'], [824, '0.000'], [867, '−40.00']]} /></Scale>
            <PaneTools />
          </Pane>

          <Pane $size={129} $last>
            <Plot viewBox="56 884 913 129" preserveAspectRatio="xMinYMin slice">
              <Grid ys={[897, 1002]} top={884} bottom={1013} />
              <rect x="56" y="897" width="1" height="22" fill="#109410" /><rect x="56" y="919" width="1" height="83" fill="#ff0" />
              {stacks.map(([a, b, g, r]) => run(a, b, 1).map(i => (
                <g key={i}>
                  <rect x={barX(i)} y="897" width="4" height={g - 897} fill="#109410" />
                  <rect x={barX(i)} y={g} width="4" height={r - g} fill="#ff0" />
                  <rect x={barX(i)} y={r} width="4" height={1003 - r} fill="#f05350" />
                </g>
              )))}
              <path d="M56 923.500H969M56 949.500H969M56 975.500H969" stroke="#7b1f6e" strokeWidth="1" />
              <path d="M67 983h14v7h3l-1-4a3 3 0 1 1 5-3h13l-8 19h-9l4-10-4 1v9H74v-13h-7z" fill="#fff" stroke="#fff" strokeWidth="3" />
              <path d="M68 984h12v15h-6v-9h-6z" fill="#111" /><circle cx="85" cy="987" r="3" fill="#111" /><path d="M91 984h8l-6 15h-8z" fill="#111" />
              <polyline points={trendLine} fill="none" stroke="#2c93e0" strokeWidth="2" strokeLinejoin="round" />
            </Plot>
            <Scale><ScaleLabels top={884} height={129} items={[[898, '20.00'], [950, '10.00'], [1002, '0.000']]} /></Scale>
          </Pane>

          <TimeRow>
            <Plot viewBox="56 1014 913 26" preserveAspectRatio="xMinYMin slice" fontSize="12" fill={INK} textAnchor="middle">
              {months.map((m, i) => <text key={m} x={monthX[i]} y="1032" fontWeight={i === 1 ? 700 : 400}>{m}</text>)}
            </Plot>
            <AxisCorner aria-label="Axis settings">
              <svg width="16" height="14" viewBox="0 0 16 14" fill="none" stroke={INK}><path d="M4.500 1h7L15 7l-3.500 6h-7L1 7z" /><circle cx="8" cy="7" r="2" /></svg>
            </AxisCorner>
          </TimeRow>
          <BottomBar>
            {ranges.map(([t, w]) => <Range key={t} $w={w}>{t}</Range>)}
            <Divider $gap={5} />
            <Slot $w={36} aria-label="Go to date"><Icon><path d="M5.500 14V6.500a1 1 0 0 1 1-1h15a1 1 0 0 1 1 1v15a1 1 0 0 1-1 1H15M5.500 9.500h17M9.500 4v4M18.500 4v4M4 19.500h7M8 16l3.500 3.500L8 23" /></Icon></Slot>
            <Spacer />
            <Range $w={110}>13:22:14 UTC+8</Range>
            <Divider $gap={5} />
            <Range $w={36}>ADJ</Range>
          </BottomBar>
        </Center>

        <RightColumn aria-label="Panels">
          <Slot $h={46} aria-label="Watchlist"><Icon s={32}><path d="M5 4h18v21l-9-4-9 4zM8.500 8.500h11M8.500 12.500h11M8.500 16.500h11" /></Icon></Slot>
          <Slot $h={46} aria-label="Alerts"><Icon s={32}><circle cx="14" cy="15" r="9.5" /><path d="M14.500 9.500v6H10M2.500 7.500l5-4.500M20.500 3l5 4.500" /></Icon></Slot>
          <Slot $h={46} aria-label="Object tree"><Icon s={32}><path d="M4 11.500l10-6 10 6-10 6zM4 16.500l10 6 10-6" /></Icon></Slot>
          <Slot $h={46} aria-label="Chats"><Icon s={32}><path d="M4 5.500h15a1.500 1.500 0 0 1 1.500 1.500v9a1.500 1.500 0 0 1-1.500 1.500H8L3.500 22V7c0-1 .5-1.500 1.500-1.500M12.500 19c0 1 .5 1.500 1.500 1.500h7l3.500 4V12c0-1-.5-1.500-1.500-1.500" /></Icon><Count $top={5} $left={22}>1</Count></Slot>
          <Spacer />
          <Slot $h={44} aria-label="Screener"><Icon s={32}><circle cx="14" cy="14" r="11.5" /><circle cx="14" cy="14" r="6.5" /><path d="M14 14l7.500-7.500" /><circle cx="14" cy="14" r="1.5" fill={INK} /></Icon></Slot>
          <Slot $h={44} aria-label="Pine editor"><Icon s={32}><path d="M3.500 23.500h21l-3.500-6M7 17.500l-3.500 6M6.500 14.500l7.500-11 7.500 11.500-3.500 3.500-6-5.500-3 2z" /></Icon></Slot>
          <Slot $h={44} aria-label="Calendar"><Icon s={32}><rect x="4" y="5" width="20" height="19" rx="2" /><path d="M4 11.500h20" /><path d="M8 3.500h2v4H8zM18 3.500h2v4h-2z" fill="#fff" /></Icon></Slot>
          <Slot $h={47} aria-label="News"><Icon s={32}><circle cx="7" cy="21" r="1.8" /><path d="M5 15c5 0 8 3 8 8M5 10.500c8 0 12.500 5 12.500 12.500M6 6c10 0 16 7 16 17" /></Icon><Count $w={28} $top={5} $left={9}>99+</Count></Slot>
          <Slot $h={46} aria-label="Notifications"><Icon s={32}><path d="M6.500 19.500V12a7.500 7.500 0 0 1 15 0v7.500M4 19.500h20v3H4zM11.500 23c0 3 5 3 5 0" /></Icon><Count $w={20} $top={4} $left={16}>57</Count></Slot>
          <Slot $h={46} aria-label="Products"><AppsButton><svg width="20" height="20" viewBox="0 0 20 20" fill="#fff">{[1, 8, 15].map(y => [1, 8, 15].map(x => <rect key={`${x}${y}`} x={x} y={y} width="4" height="4" rx="1" />))}</svg></AppsButton></Slot>
          <Rule $m={5} $w={32} />
          <Slot $h={47} aria-label="Help"><Icon s={32}><circle cx="14" cy="14" r="12" /><path d="M10 11.500c0-5.500 8-5.500 8 0 0 3-4 3-4 6.500" /><circle cx="14" cy="20.5" r="1.2" /></Icon></Slot>
        </RightColumn>
      </Shell>
    </>
  );
}
